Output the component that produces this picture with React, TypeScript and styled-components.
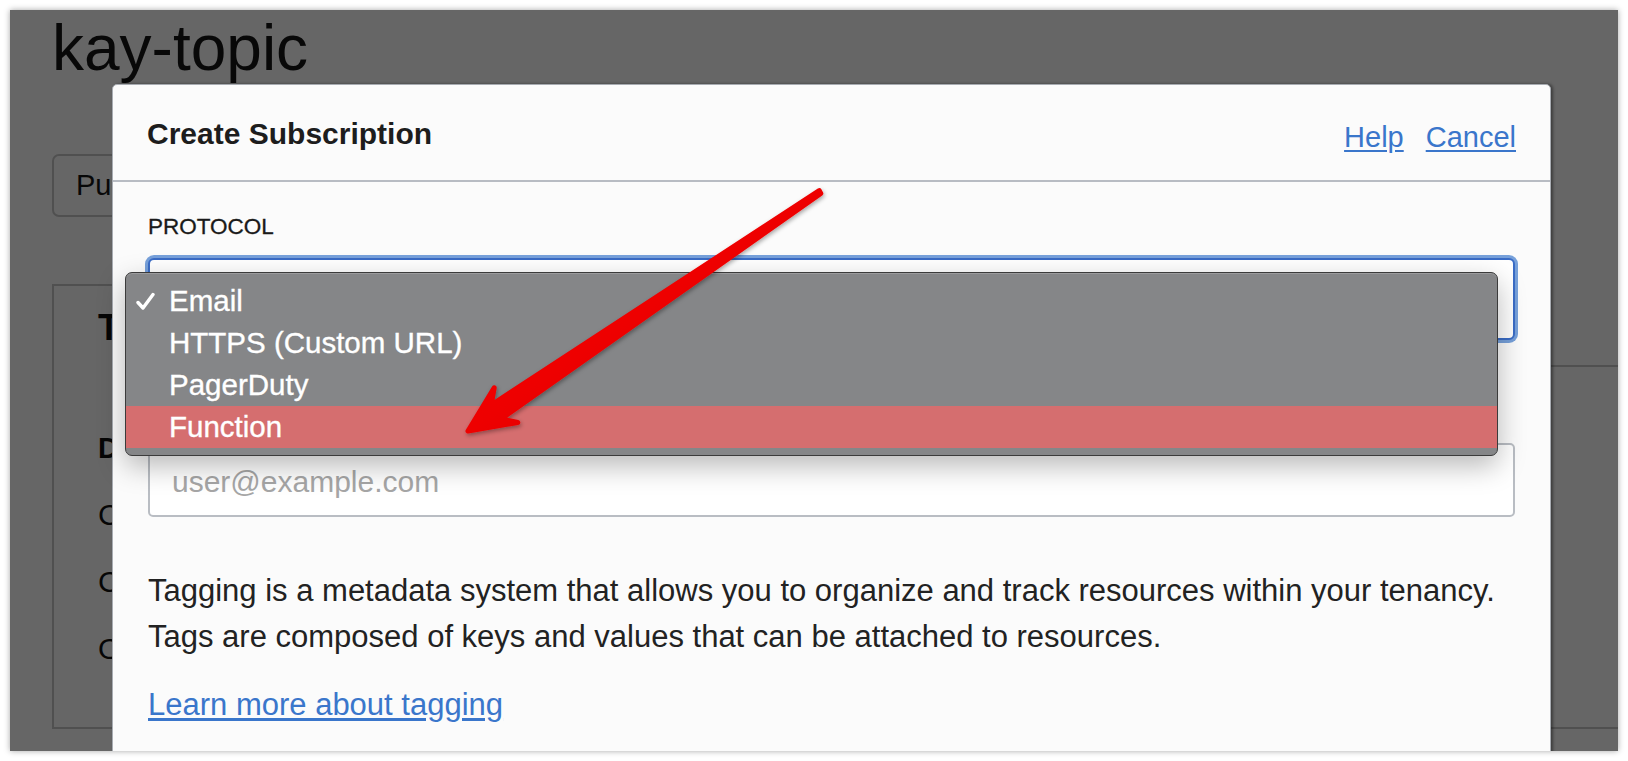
import styled, { createGlobalStyle } from "styled-components";

const GlobalStyle = createGlobalStyle`
  html, body {
    margin: 0;
    padding: 0;
    background: #ffffff;
  }
  body {
    font-family: "Liberation Sans", Arial, Helvetica, sans-serif;
  }
  * {
    box-sizing: border-box;
  }
`;

const Frame = styled.div`
  width: 1628px;
  height: 761px;
  padding: 10px;
  background: #ffffff;
`;

const Screen = styled.div`
  position: relative;
  width: 1608px;
  height: 741px;
  overflow: hidden;
  background: #ffffff;
  box-shadow: 0 0 6px rgba(0, 0, 0, 0.35);
`;

/* page under the backdrop */

const Page = styled.div`
  padding: 1px 0 0 42px;
`;

const TopicTitle = styled.h1`
  margin: 0;
  font-size: 64px;
  line-height: 74px;
  font-weight: 400;
  color: #161616;
`;

const ActionButton = styled.button`
  display: block;
  margin-top: 69px;
  height: 63px;
  padding: 0 22px;
  border: 2px solid #c8c8c8;
  border-radius: 7px;
  background: #ffffff;
  font-family: inherit;
  font-size: 29px;
  color: #161616;
`;

const Panel = styled.section`
  margin-top: 67px;
  width: calc(100% + 120px);
  height: 445px;
  border-left: 2px solid #c8c8c8;
  border-bottom: 2px solid #c8c8c8;
`;

const PanelHead = styled.div`
  display: flex;
  height: 83px;
`;

const HeadTab = styled.div`
  width: 1000px;
  border-top: 2px solid #c8c8c8;
  padding: 21px 0 0 44px;
`;

const HeadRest = styled.div`
  flex: 1;
  border-bottom: 2px solid #c8c8c8;
`;

const PanelTitle = styled.h2`
  margin: 0;
  font-size: 36px;
  line-height: 42px;
  font-weight: 700;
  color: #111;
`;

const PanelBody = styled.div`
  display: flex;
  flex-direction: column;
  gap: 33px;
  padding: 64px 0 0 44px;
`;

const SectionHeading = styled.h3`
  margin: 0;
  font-size: 29px;
  line-height: 34px;
  font-weight: 700;
  color: #111;
`;

const InfoRow = styled.div`
  font-size: 30px;
  line-height: 34px;
  color: #111;
`;

const Backdrop = styled.div`
  position: absolute;
  inset: 0;
  background: rgba(0, 0, 0, 0.6);
`;

/* dialog */

const Modal = styled.div`
  position: absolute;
  left: 102px;
  top: 74px;
  width: 1439px;
  height: 720px;
  background: #fbfbfb;
  border: 1px solid #a8acb2;
  border-radius: 5px 5px 0 0;
  box-shadow: 2px 0 3px rgba(0, 0, 0, 0.4);
`;

const ModalHeader = styled.header`
  display: flex;
  align-items: center;
  justify-content: space-between;
  height: 97px;
  padding: 0 34px 0 34px;
  border-bottom: 2px solid #b8bcc3;
`;

const ModalTitle = styled.h2`
  margin: 2px 0 0;
  font-size: 30px;
  font-weight: 700;
  color: #1d1d1d;
`;

const HeaderLinks = styled.nav`
  display: flex;
  gap: 22px;
  margin-top: 9px;
`;

const Link = styled.a<{ $size: number }>`
  font-size: ${(p) => p.$size}px;
  color: #3a76cb;
  text-decoration: underline;
  text-underline-offset: 3px;
  cursor: pointer;
`;

const ModalBody = styled.div`
  padding: 32px 35px 0 35px;
`;

const FieldLabel = styled.label<{ $gap?: number }>`
  display: block;
  margin-top: ${(p) => p.$gap ?? 0}px;
  font-size: 22.5px;
  line-height: 26px;
  color: #1a1a1a;
  -webkit-text-stroke: 0.3px #1a1a1a;
`;

const SelectBox = styled.div`
  display: flex;
  align-items: center;
  justify-content: space-between;
  margin-top: 18px;
  height: 82px;
  padding: 0 18px 0 22px;
  border: 2px solid #3a6cc6;
  border-radius: 6px;
  background: #ffffff;
  box-shadow: 0 0 0 3px #76a0da;
  font-size: 30px;
  color: #222;
`;

const TextInput = styled.input`
  display: block;
  width: 100%;
  margin-top: 18px;
  height: 74px;
  padding: 3px 22px 0;
  border: 2px solid #b9bdc3;
  border-radius: 5px;
  background: #ffffff;
  font-family: inherit;
  font-size: 30px;
  color: #222;
  outline: none;
  &::placeholder {
    color: #a6a6a6;
  }
`;

const Description = styled.p`
  margin: 51px 0 0;
  font-size: 31px;
  line-height: 46px;
  color: #222;
`;

const LearnLink = styled(Link)`
  display: inline-block;
  margin-top: 22px;
  line-height: 46px;
`;

/* native select popup */

const Menu = styled.ul`
  position: absolute;
  left: 12px;
  top: 187px;
  width: 1373px;
  height: 184px;
  margin: 0;
  padding: 7px 0;
  list-style: none;
  background: #858688;
  border: 1px solid #3b3b3b;
  border-radius: 7px;
  box-shadow: inset 0 1px 0 rgba(255, 255, 255, 0.18),
    0 10px 28px rgba(0, 0, 0, 0.28);
  overflow: hidden;
`;

const MenuItem = styled.li<{ $active?: boolean }>`
  display: flex;
  align-items: center;
  height: 42px;
  padding-left: 10px;
  background: ${(p) => (p.$active ? "#d56e6f" : "transparent")};
  font-size: 29.5px;
  line-height: 42px;
  color: #ffffff;
  -webkit-text-stroke: 0.35px #ffffff;
`;

const CheckSlot = styled.span`
  display: flex;
  align-items: center;
  width: 33px;
  height: 42px;
`;

const Annotation = styled.svg`
  position: absolute;
  left: -10px;
  top: -10px;
  width: 1628px;
  height: 761px;
  pointer-events: none;
`;

const options = ["Email", "HTTPS (Custom URL)", "PagerDuty", "Function"];

const Check = () => (
  <svg width="19" height="19" viewBox="0 0 19 19">
    <path
      d="M2 10.5 L7 16 L17 2.5"
      fill="none"
      stroke="#ffffff"
      strokeWidth="3.4"
      strokeLinecap="round"
      strokeLinejoin="round"
    />
  </svg>
);

const Chevrons = () => (
  <svg width="16" height="26" viewBox="0 0 16 26">
    <path
      d="M3 10 L8 4 L13 10 M3 16 L8 22 L13 16"
      fill="none"
      stroke="#333"
      strokeWidth="2.4"
      strokeLinecap="round"
      strokeLinejoin="round"
    />
  </svg>
);

const Arrow = () => (
  <Annotation viewBox="0 0 1628 761">
    <defs>
      <linearGradient id="arrowFill" x1="0" y1="0" x2="1" y2="1">
        <stop offset="0" stopColor="#ff2a2a" />
        <stop offset="0.5" stopColor="#ee0000" />
        <stop offset="1" stopColor="#c80000" />
      </linearGradient>
      <filter id="arrowShadow" x="-10%" y="-10%" width="130%" height="130%">
        <feDropShadow dx="1" dy="2" stdDeviation="2" floodOpacity="0.35" />
      </filter>
    </defs>
    <polygon
      points="468,431 517.8,422.5 501,419 820.8,193.4 819.2,190.6 491.2,405 494.2,387.7"
      fill="url(#arrowFill)"
      stroke="url(#arrowFill)"
      strokeWidth="5"
      strokeLinejoin="round"
      filter="url(#arrowShadow)"
    />
  </Annotation>
);

export default function App() {
  return (
    <>
      <GlobalStyle />
      <Frame>
        <Screen>
          <Page>
            <TopicTitle>kay-topic</TopicTitle>
            <ActionButton>Publish Message</ActionButton>
            <Panel>
              <PanelHead>
                <HeadTab>
                  <PanelTitle>Topic Information</PanelTitle>
                </HeadTab>
                <HeadRest />
              </PanelHead>
              <PanelBody>
                <SectionHeading>Details</SectionHeading>
                <InfoRow>Compartment: kay</InfoRow>
                <InfoRow>Created: Mon, 20 May 2019</InfoRow>
                <InfoRow>OCID: ...a4fq</InfoRow>
              </PanelBody>
            </Panel>
          </Page>

          <Backdrop />

          <Modal>
            <ModalHeader>
              <ModalTitle>Create Subscription</ModalTitle>
              <HeaderLinks>
                <Link $size={29}>Help</Link>
                <Link $size={29}>Cancel</Link>
              </HeaderLinks>
            </ModalHeader>
            <ModalBody>
              <FieldLabel>PROTOCOL</FieldLabel>
              <SelectBox>
                <span>Email</span>
                <Chevrons />
              </SelectBox>
              <FieldLabel $gap={59}>EMAIL</FieldLabel>
              <TextInput placeholder="user@example.com" />
              <Description>
                Tagging is a metadata system that allows you to organize and
                track resources within your tenancy. Tags are composed of keys
                and values that can be attached to resources.
              </Description>
              <LearnLink $size={31}>Learn more about tagging</LearnLink>
            </ModalBody>
            <Menu>
              {options.map((o, i) => (
                <MenuItem key={o} $active={i === options.length - 1}>
                  <CheckSlot>{i === 0 && <Check />}</CheckSlot>
                  {o}
                </MenuItem>
              ))}
            </Menu>
          </Modal>

          <Arrow />
        </Screen>
      </Frame>
    </>
  );
}
